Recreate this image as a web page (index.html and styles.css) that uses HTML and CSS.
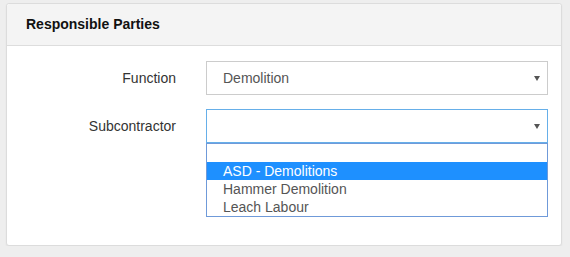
FILE: index.html
```html
<!DOCTYPE html>
<html lang="en">
<head>
  <meta charset="UTF-8">
  <meta name="viewport" content="width=device-width, initial-scale=1.0">
  <title>Responsible Parties</title>
  <link rel="stylesheet" href="styles.css">
</head>
<body>
  <!-- Panel -->
  <div class="panel">
    <div class="panel-heading">Responsible Parties</div>
    <div class="panel-body">
      <div class="form-row">
        <label class="form-label">Function</label>
        <div class="select">
          <span class="select-value">Demolition</span>
          <span class="caret"></span>
        </div>
      </div>
      <div class="form-row">
        <label class="form-label">Subcontractor</label>
        <div class="select select-open">
          <span class="select-value"></span>
          <span class="caret"></span>
          <!-- Lista desplegada -->
          <ul class="dropdown">
            <li class="option"></li>
            <li class="option selected">ASD - Demolitions</li>
            <li class="option">Hammer Demolition</li>
            <li class="option">Leach Labour</li>
          </ul>
        </div>
      </div>
    </div>
  </div>
</body>
</html>
```
FILE: styles.css
```css
body {
  margin: 0;
  padding: 3px 0 0 6px;
  font-family: "Liberation Sans", Arial, sans-serif;
  font-size: 14px;
  background: #eeeeee;
  color: #333;
}
.panel {
  width: 554px;
  height: 241px;
  background: #fff;
  border: 1px solid #dcdcdc;
  border-radius: 3px;
  box-shadow: 0 1px 2px rgba(0, 0, 0, 0.06);
}
.panel-heading {
  height: 41px;
  line-height: 41px;
  padding: 0 19px;
  background: #f4f4f4;
  border-bottom: 1px solid #dddddd;
  border-radius: 3px 3px 0 0;
  font-weight: bold;
  color: #111;
}
.panel-body {
  padding-top: 15px;
}
.form-row {
  display: grid;
  grid-template-columns: 169px 342px;
  column-gap: 30px;
  align-items: center;
  margin-bottom: 14px;
}
.form-label {
  text-align: right;
  color: #333;
}
.select {
  position: relative;
  box-sizing: border-box;
  height: 34px;
  border: 1px solid #cccccc;
  display: flex;
  align-items: center;
  padding: 0 16px;
  color: #555;
}
.select-open {
  border-color: #66afe9;
}
.caret {
  position: absolute;
  right: 7px;
  top: 14px;
  width: 0;
  height: 0;
  border-left: 3px solid transparent;
  border-right: 3px solid transparent;
  border-top: 5px solid #555;
}
.dropdown {
  position: absolute;
  top: 33px;
  left: -1px;
  right: -1px;
  margin: 0;
  padding: 0;
  list-style: none;
  background: #fff;
  border: 1px solid #6f9ad9;
}
.option {
  height: 18px;
  line-height: 18px;
  padding-left: 16px;
  color: #555;
}
.option.selected {
  background: #1e90ff;
  color: #fff;
}
```
